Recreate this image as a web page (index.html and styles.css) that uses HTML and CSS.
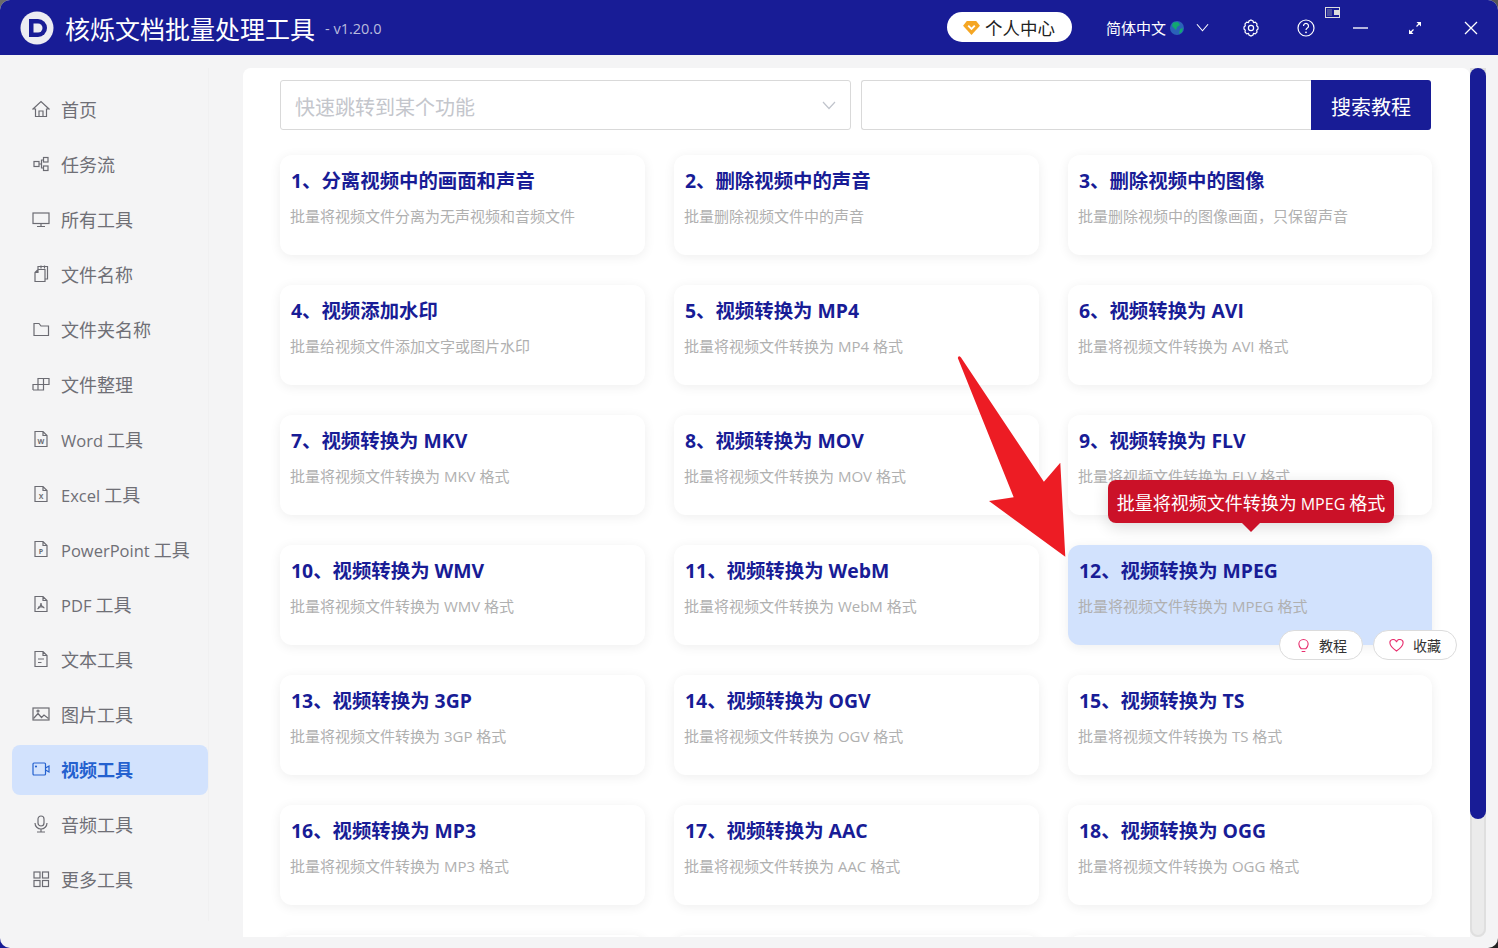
FILE: index.html
```html
<!DOCTYPE html>
<html lang="zh-CN">
<head>
<meta charset="utf-8">
<title>核烁文档批量处理工具</title>
<link rel="stylesheet" href="styles.css">
</head>
<body>
<div class="corner c-tl"></div><div class="corner c-tr"></div><div class="corner c-bl"></div><div class="corner c-br"></div>
<div class="window">
  <header class="topbar">
    <svg class="logo" viewBox="0 0 34 34"><circle cx="17" cy="17" r="16.500" fill="#ececf2"/><path d="M9 8h9a9 9 0 0 1 0 18H9z" fill="#181c96"/><path d="M13.500 12.500h4.500a4.500 4.500 0 0 1 0 9h-4.500z" fill="#ececf2"/></svg>
    <span class="app-name">核烁文档批量处理工具</span>
    <span class="version">- v1.20.0</span>
    <span class="pill">
      <svg class="pill-icon" viewBox="0 0 18 16"><path d="M4 1h10l4 5-9 10L0 6z" fill="#f5a623"/><path d="M5.500 6l3.500 3.500L12.500 6" fill="none" stroke="#fff" stroke-width="2"/></svg>
      个人中心
    </span>
    <span class="lang">简体中文</span>
    <svg class="globe" viewBox="0 0 14 14"><circle cx="7" cy="7" r="7" fill="#2a62b8"/><path d="M3 1.500 8 1l2 3-3 2-1 3-2-2-2-2zM10 8l3-1-1 4-3 2z" fill="#12a870"/></svg>
    <svg class="ti chev" viewBox="0 0 14 9"><path d="M1 1l6 7 6-7" fill="none" stroke="#fff" stroke-width="1.200"/></svg>
    <svg class="ti gear" viewBox="0 0 18 18"><path d="M9 1l2 1 .5 1.500 1.800-.3 1.700 1.700-.3 1.800L16 8v2l-1.300 1.300.3 1.800-1.700 1.700-1.800-.3L11 16l-2 1-2-1-.5-1.500-1.800.3L3 13.100l.3-1.800L2 10V8l1.300-1.300L3 4.900l1.700-1.700 1.800.3L7 2z" fill="none" stroke="#fff" stroke-width="1.200"/><circle cx="9" cy="9" r="2.600" fill="none" stroke="#fff" stroke-width="1.200"/></svg>
    <svg class="ti help" viewBox="0 0 18 18"><circle cx="9" cy="9" r="8" fill="none" stroke="#fff" stroke-width="1.200"/><path d="M6.500 7a2.500 2.500 0 1 1 3.800 2.100c-.9.600-1.300 1-1.300 2" fill="none" stroke="#fff" stroke-width="1.200"/><circle cx="9" cy="13.300" r=".9" fill="#fff"/></svg>
    <svg class="ti minw" viewBox="0 0 15 2"><path d="M0 1h15" stroke="#e8e8f4" stroke-width="1.500"/></svg>
    <svg class="ti expand" viewBox="0 0 14 14"><path d="M8.500 1H13v4.500zM5.500 13H1V8.500z" fill="#fff"/><path d="M11 3 8.500 5.500M3 11l2.500-2.500" stroke="#fff" stroke-width="1.200"/></svg>
    <svg class="ti closew" viewBox="0 0 14 14"><path d="M1 1l12 12M13 1 1 13" stroke="#fff" stroke-width="1.300"/></svg>
    <svg class="tiny" viewBox="0 0 16 12"><rect x=".5" y=".5" width="14" height="10" fill="#181c96" stroke="#ddd"/><rect x="2" y="2" width="5" height="7" fill="#4a4f9e"/><rect x="9" y="3" width="6" height="5" fill="#ddd"/></svg>
  </header>
  <div class="body-row">
    <nav class="sidebar">
      <a class="nav-item"><svg class="ni" viewBox="0 0 18 18"><path d="M1 9l8-7.500L17 9h-2.500v7.500h-11V9zM7 16.500V11h4v5.500"/></svg>首页</a>
      <a class="nav-item"><svg class="ni" viewBox="0 0 18 18"><rect x="2" y="6.500" width="5" height="5"/><rect x="11.500" y="2.500" width="4.500" height="4.500"/><rect x="11.500" y="11" width="4.500" height="4.500"/><path d="M7 9h2.500V5h2M9.500 9v4h2"/></svg>任务流</a>
      <a class="nav-item"><svg class="ni" viewBox="0 0 18 18"><rect x="1" y="3" width="16" height="10.500"/><path d="M9 13.500V16M5 16.500h8"/></svg>所有工具</a>
      <a class="nav-item"><svg class="ni" viewBox="0 0 18 18"><path d="M6 4.500h7v12H3v-9zM6 4.500v3H3M6 4.500V1.500h9.500v12.500H13M9 .5v3M12.500.5v3"/></svg>文件名称</a>
      <a class="nav-item"><svg class="ni" viewBox="0 0 18 18"><path d="M2 3.500h5l2 2.500h7.500v9.500H2z"/></svg>文件夹名称</a>
      <a class="nav-item"><svg class="ni" viewBox="0 0 18 18"><path d="M1 15V9.500h5V3.500h11v6h-5.500V3.500M6 9.500h5.500V15H1M6 9.500V15"/></svg>文件整理</a>
      <a class="nav-item"><svg class="ni" viewBox="0 0 18 18"><path d="M3 1.500h8l4 4v11H3zM11 1.500v4h4"/><text x="9" y="13.500" class="nit">W</text></svg><span><span class="lat">Word</span> 工具</span></a>
      <a class="nav-item"><svg class="ni" viewBox="0 0 18 18"><path d="M3 1.500h8l4 4v11H3zM11 1.500v4h4"/><text x="9" y="13.500" class="nit">X</text></svg><span><span class="lat">Excel</span> 工具</span></a>
      <a class="nav-item"><svg class="ni" viewBox="0 0 18 18"><path d="M3 1.500h8l4 4v11H3zM11 1.500v4h4"/><text x="9" y="13.500" class="nit">P</text></svg><span><span class="lat">PowerPoint</span> 工具</span></a>
      <a class="nav-item"><svg class="ni" viewBox="0 0 18 18"><path d="M3 1.500h8l4 4v11H3zM11 1.500v4h4M9 8c0 3-2 5-3.500 6M9 8c0 3 2 4.500 3.500 5M6 12h6"/></svg><span><span class="lat">PDF</span> 工具</span></a>
      <a class="nav-item"><svg class="ni" viewBox="0 0 18 18"><path d="M3 1.500h8l4 4v11H3zM11 1.500v4h4M6 9h6M6 12.500h3.500"/></svg>文本工具</a>
      <a class="nav-item"><svg class="ni" viewBox="0 0 18 18"><rect x="1" y="3" width="16" height="12"/><path d="M1.500 13.500l4.500-5 3.500 4 2.500-2.500 4.500 3.500"/><circle cx="6" cy="6" r="1"/></svg>图片工具</a>
      <a class="nav-item active"><svg class="ni" viewBox="0 0 18 18"><rect x="1" y="3" width="12.500" height="12" rx="1"/><path d="M13.500 8l3.500-2v6l-3.500-2"/><circle cx="4" cy="6.500" r=".5"/></svg>视频工具</a>
      <a class="nav-item"><svg class="ni" viewBox="0 0 18 18"><rect x="6" y="1" width="6" height="10" rx="3"/><path d="M3 8a6 6 0 0 0 12 0M9 14v3M5 17h8"/></svg>音频工具</a>
      <a class="nav-item"><svg class="ni" viewBox="0 0 18 18"><rect x="2" y="2" width="6" height="6"/><rect x="10.500" y="2" width="6" height="6"/><rect x="2" y="10.500" width="6" height="6"/><rect x="10.500" y="10.500" width="6" height="6"/></svg>更多工具</a>
    </nav>
    <main class="panel">
      <div class="search-row">
        <div class="select"><span class="nudge">快速跳转到某个功能</span><svg class="sel-chev" viewBox="0 0 14 9"><path d="M1 1l6 6.500L13 1" fill="none" stroke="#c0c4cc" stroke-width="1.200"/></svg></div>
        <div class="query"><div class="query-input"></div><div class="query-btn"><span class="nudge">搜索教程</span></div></div>
      </div>
      <div class="grid">
        <article class="card"><h3>1、分离视频中的画面和声音</h3><p>批量将视频文件分离为无声视频和音频文件</p></article>
        <article class="card"><h3>2、删除视频中的声音</h3><p>批量删除视频文件中的声音</p></article>
        <article class="card"><h3>3、删除视频中的图像</h3><p>批量删除视频中的图像画面，只保留声音</p></article>
        <article class="card"><h3>4、视频添加水印</h3><p>批量给视频文件添加文字或图片水印</p></article>
        <article class="card"><h3>5、视频转换为 MP4</h3><p>批量将视频文件转换为 MP4 格式</p></article>
        <article class="card"><h3>6、视频转换为 AVI</h3><p>批量将视频文件转换为 AVI 格式</p></article>
        <article class="card"><h3>7、视频转换为 MKV</h3><p>批量将视频文件转换为 MKV 格式</p></article>
        <article class="card"><h3>8、视频转换为 MOV</h3><p>批量将视频文件转换为 MOV 格式</p></article>
        <article class="card"><h3>9、视频转换为 FLV</h3><p>批量将视频文件转换为 FLV 格式</p></article>
        <article class="card"><h3>10、视频转换为 WMV</h3><p>批量将视频文件转换为 WMV 格式</p></article>
        <article class="card"><h3>11、视频转换为 WebM</h3><p>批量将视频文件转换为 WebM 格式</p></article>
        <article class="card hover"><h3>12、视频转换为 MPEG</h3><p>批量将视频文件转换为 MPEG 格式</p></article>
        <article class="card"><h3>13、视频转换为 3GP</h3><p>批量将视频文件转换为 3GP 格式</p></article>
        <article class="card"><h3>14、视频转换为 OGV</h3><p>批量将视频文件转换为 OGV 格式</p></article>
        <article class="card"><h3>15、视频转换为 TS</h3><p>批量将视频文件转换为 TS 格式</p></article>
        <article class="card"><h3>16、视频转换为 MP3</h3><p>批量将视频文件转换为 MP3 格式</p></article>
        <article class="card"><h3>17、视频转换为 AAC</h3><p>批量将视频文件转换为 AAC 格式</p></article>
        <article class="card"><h3>18、视频转换为 OGG</h3><p>批量将视频文件转换为 OGG 格式</p></article>
        <article class="card"></article>
        <article class="card"></article>
        <article class="card"></article>
      </div>
    </main>
    <div class="scrolltrack"><div class="scrollthumb"></div></div>
  </div>
  <div class="tooltip"><span>批量将视频文件转换为 <span class="lat-tip">MPEG</span> 格式</span></div>
  <div class="mini-btn btn-a"><svg class="mb-i" viewBox="0 0 14 16"><path d="M4.500 11.500C3 10 2 8.800 2 6.500a5 5 0 0 1 10 0c0 2.300-1 3.500-2.500 5zM5 14.500h4" fill="none" stroke="#e8306f" stroke-width="1.200"/></svg>教程</div>
  <div class="mini-btn btn-b"><svg class="mb-i heart" viewBox="0 0 16 14"><path d="M8 13C3 9.500 1 7.500 1 4.700A3.500 3.500 0 0 1 8 3.500a3.500 3.500 0 0 1 7 1.200C15 7.500 13 9.500 8 13z" fill="none" stroke="#e8306f" stroke-width="1.200"/></svg>收藏</div>
  <svg class="red-arrow" viewBox="0 0 120 210"><path d="M1.800 11 Q2.500 8 5 10.500L87.900 134.700 104.300 115.700 109.300 209.700 33 154 57.700 150.300z" fill="#ed1c24"/></svg>
</div>
</body>
</html>
```
FILE: styles.css
```css
* { box-sizing: border-box; }
html, body { margin: 0; padding: 0; height: 100%; }
body {
  position: relative;
  width: 1498px;
  height: 948px;
  overflow: hidden;
  background: #f4f4f5;
  font-family: "Noto Sans CJK SC", "Open Sans", sans-serif;
}
.corner { position: absolute; width: 12px; height: 12px; }
.c-tl { left: 0; top: 0; background: #6b6b6b; }
.c-tr { right: 0; top: 0; background: #555; }
.c-bl { left: 0; bottom: 0; background: #181c96; }
.c-br { right: 0; bottom: 0; background: #222; }
.window {
  position: relative;
  width: 1498px;
  height: 948px;
  border-radius: 10px;
  overflow: hidden;
  background: #f4f4f5;
  display: flex;
  flex-direction: column;
}
.topbar {
  flex: none;
  height: 55px;
  background: #181c96;
  display: flex;
  align-items: center;
  color: #fff;
  position: relative;
}
.logo { width: 34px; height: 34px; margin-left: 20px; flex: none; }
.app-name { font-size: 25px; margin-left: 11px; line-height: 34px; }
.version { font-size: 14.500px; color: #b9bbdd; margin: 2px 0 0 10px; font-family: "Open Sans", sans-serif; }
.pill {
  margin: 0 0 1px auto;
  width: 125px;
  height: 30px;
  border-radius: 15px;
  background: #fff;
  color: #222;
  font-size: 17.500px;
  display: flex;
  align-items: center;
  padding-left: 16px;
  gap: 5px;
}
.pill-icon { width: 17px; height: 15px; flex: none; }
.lang { font-size: 15px; margin-left: 34px; width: 62px; white-space: nowrap; }
.globe { width: 14px; height: 14px; margin-left: 2px; flex: none; }
.ti { flex: none; }
.chev { width: 13px; height: 9px; margin-left: 12px; }
.gear { width: 18px; height: 18px; margin-left: 33px; }
.help { width: 18px; height: 18px; margin-left: 37px; }
.minw { width: 15px; height: 2px; margin-left: 38px; }
.expand { width: 14px; height: 14px; margin-left: 40px; }
.closew { width: 14px; height: 14px; margin-left: 42px; margin-right: 20px; }
.tiny { position: absolute; left: 1325px; top: 7px; width: 16px; height: 12px; }
.body-row { flex: 1; display: flex; min-height: 0; padding-top: 13px; padding-bottom: 11px; }
.sidebar {
  flex: none;
  width: 209px;
  padding: 17px 0 0 12px;
  border-right: 1px solid #f0f0f1;
  margin-bottom: 16px;
  display: flex;
  flex-direction: column;
  gap: 5px;
}
.nav-item {
  width: 196px;
  height: 50px;
  border-radius: 8px;
  display: flex;
  align-items: center;
  padding: 0 0 2px 20px;
  gap: 12px;
  font-size: 18px;
  color: #6f6f76;
  white-space: nowrap;
  font-family: "Noto Sans CJK SC", "Open Sans", sans-serif;
}
.lat { font-family: "Open Sans", sans-serif; font-size: 16.500px; }
.ni { width: 18px; height: 18px; flex: none; margin-right: -1px; fill: none; stroke: #6b6b72; stroke-width: 1.200; }
.nit { font-size: 7px; font-weight: 700; text-anchor: middle; fill: #6b6b72; stroke: none; font-family: "Open Sans", sans-serif; }
.nav-item.active { background: #d2e2fd; color: #2461cf; font-weight: 700; }
.nav-item.active .ni { stroke: #2461cf; }
.panel {
  flex: none;
  width: 1227px;
  margin-left: 34px;
  background: #fff;
  border-radius: 8px 8px 0 0;
  padding: 12px 0 0 37px;
  overflow: hidden;
}
.search-row { display: flex; gap: 10px; width: 1151px; height: 50px; }
.select {
  width: 571px;
  height: 50px;
  border: 1px solid #d9d9d9;
  border-radius: 3px;
  display: flex;
  align-items: center;
  justify-content: space-between;
  padding: 0 14px;
  font-size: 20px;
  color: #c4c6cc;
}
.nudge { padding-top: 2px; }
.sel-chev { width: 14px; height: 9px; }
.query { flex: 1; display: flex; }
.query-input { flex: 1; border: 1px solid #d9d9d9; border-right: 0; border-radius: 3px 0 0 3px; }
.query-btn {
  width: 120px;
  background: #181c96;
  color: #fff;
  font-size: 20px;
  border-radius: 0 3px 3px 0;
  display: flex;
  align-items: center;
  justify-content: center;
}
.grid {
  display: grid;
  grid-template-columns: 365px 365px 364px;
  grid-auto-rows: 100px;
  column-gap: 29px;
  row-gap: 30px;
  margin-top: 25px;
}
.card {
  background: #fff;
  border-radius: 12px;
  box-shadow: 0 2px 12px rgba(0, 0, 0, .07);
  padding: 12px 10px 0 11px;
}
.card.hover { background: #d2e2fd; }
.card h3 {
  margin: 0;
  font-size: 19.400px;
  line-height: 28px;
  font-weight: 700;
  color: #181c96;
  font-family: "Open Sans", "Noto Sans CJK SC", sans-serif;
  white-space: nowrap;
}
.card p {
  margin: 10px 0 0 -1px;
  font-size: 15px;
  line-height: 22px;
  color: #b0b0b0;
  font-family: "Open Sans", "Noto Sans CJK SC", sans-serif;
  white-space: nowrap;
}
.scrolltrack {
  flex: none;
  width: 16px;
  border-radius: 0 0 8px 8px;
  background: #ebebeb;
  box-shadow: inset 0 0 0 2px #dfdfdf;
}
.scrollthumb { height: 751px; background: #181c96; border-radius: 8px; }
.tooltip {
  position: absolute;
  left: 1108px;
  top: 480px;
  width: 286px;
  height: 43px;
  border-radius: 8px;
  background: #cb1128;
  color: #fff;
  font-size: 18px;
  display: flex;
  align-items: center;
  justify-content: center;
  white-space: nowrap;
  box-shadow: 0 4px 16px rgba(0, 0, 0, .14);
  font-family: "Noto Sans CJK SC", "Open Sans", sans-serif;
}
.lat-tip { font-family: "Open Sans", sans-serif; font-size: 16px; }
.tooltip::after {
  content: "";
  position: absolute;
  left: 50%;
  bottom: -9px;
  margin-left: -9px;
  border-left: 9px solid transparent;
  border-right: 9px solid transparent;
  border-top: 9px solid #cb1128;
}
.mini-btn {
  position: absolute;
  top: 630px;
  width: 84px;
  height: 30px;
  border-radius: 15px;
  border: 1px solid #dcdcdc;
  background: #fff;
  color: #333;
  font-size: 14px;
  display: flex;
  align-items: center;
  padding-left: 17px;
  gap: 9px;
}
.btn-a { left: 1279px; }
.btn-b { left: 1373px; padding-left: 15px; }
.mb-i { width: 13px; height: 15px; flex: none; }
.heart { width: 15px; height: 13px; }
.red-arrow { position: absolute; left: 956px; top: 347px; width: 120px; height: 210px; }
```
